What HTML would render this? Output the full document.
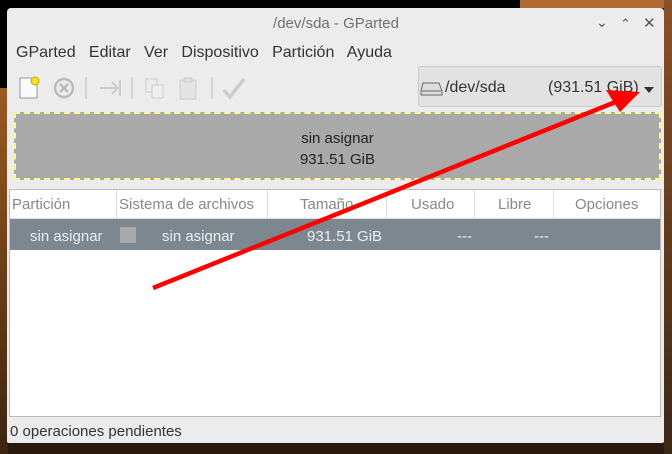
<!DOCTYPE html><html><head><style>
body{margin:0;width:672px;height:454px;overflow:hidden;background:#2a1a0e;font-family:"Liberation Sans",sans-serif;position:relative}
.t{position:absolute;white-space:nowrap}
</style></head><body>
<div style="position:absolute;left:0;top:0;width:672px;height:8px;background:#000"></div>
<div style="position:absolute;left:0;top:8px;width:22px;height:80px;background:#000"></div>
<div style="position:absolute;left:0;top:88px;width:8px;height:366px;background:linear-gradient(#9a5a20,#3a2510)"></div>
<div style="position:absolute;left:520px;top:0;width:152px;height:8px;background:#b06a30"></div>
<div style="position:absolute;left:664px;top:0;width:8px;height:454px;background:linear-gradient(#8a5028,#3a2818)"></div>
<div style="position:absolute;left:7px;top:8px;width:657px;height:435px;background:#ececec;border-radius:4px 4px 2px 2px"></div>
<div class="t" style="left:0;width:672px;top:15px;text-align:center;font-size:15px;color:#707070">/dev/sda - GParted</div>
<div class="t" style="left:596px;top:14px;font-size:14px;color:#555">&#8964;</div>
<div class="t" style="left:620px;top:16px;font-size:13px;color:#555">&#8963;</div>
<div class="t" style="left:643px;top:14px;font-size:15px;color:#555">✕</div>
<div class="t" style="left:16px;top:44px;font-size:16px;color:#333">GParted&nbsp;&nbsp; Editar&nbsp;&nbsp; Ver&nbsp;&nbsp; Dispositivo&nbsp;&nbsp; Partición&nbsp;&nbsp; Ayuda</div>
<svg style="position:absolute;left:18px;top:74px" width="240" height="28">
<rect x="2" y="4" width="17" height="20" fill="#fafafa" stroke="#999"/><circle cx="17" cy="7" r="4" fill="#f5e030" stroke="#c8a800"/>
<circle cx="46" cy="14" r="9" fill="none" stroke="#bbb" stroke-width="2.5"/><path d="M42 10l8 8M50 10l-8 8" stroke="#bbb" stroke-width="2.5"/>
<line x1="68" y1="3" x2="68" y2="25" stroke="#bbb"/>
<path d="M82 14h18M94 8l6 6-6 6M102 6v16" stroke="#ccc" stroke-width="2" fill="none"/>
<line x1="114" y1="3" x2="114" y2="25" stroke="#bbb"/>
<rect x="128" y="5" width="11" height="13" fill="#eee" stroke="#ccc"/><rect x="134" y="11" width="11" height="13" fill="#eee" stroke="#ccc"/>
<rect x="162" y="6" width="16" height="19" fill="#e4e4e4" stroke="#ccc"/><rect x="166" y="4" width="8" height="4" fill="#ddd" stroke="#ccc"/>
<line x1="194" y1="3" x2="194" y2="25" stroke="#bbb"/>
<path d="M206 16l6 7 14-18" stroke="#ccc" stroke-width="3.5" fill="none"/>
</svg>
<div style="position:absolute;left:418px;top:66px;width:244px;height:41px;background:#e2e2e2;border:1px solid #ccc;border-radius:3px;box-sizing:border-box"></div>
<svg style="position:absolute;left:420px;top:79px" width="24" height="18"><path d="M3 4h16l3 8v4H1v-4z" fill="#ddd" stroke="#666"/><path d="M2 12h19" stroke="#666"/></svg>
<div class="t" style="left:445px;top:79px;font-size:16px;color:#333">/dev/sda</div>
<div class="t" style="left:548px;top:79px;font-size:16px;color:#333">(931.51 GiB)</div>
<div style="position:absolute;left:644px;top:87px;border:5px solid transparent;border-top:6px solid #333"></div>
<div style="position:absolute;left:14px;top:112px;width:647px;height:68px;background:#a9a9a9;border:2px dashed #fafa90;box-sizing:border-box"></div>
<div class="t" style="left:14px;width:647px;top:128px;text-align:center;font-size:15px;color:#222;line-height:21px">sin asignar<br>931.51 GiB</div>
<div style="position:absolute;left:9px;top:189px;width:652px;height:228px;background:#fff;border:1px solid #bbb;box-sizing:border-box"></div>
<div style="position:absolute;left:10px;top:219px;width:650px;height:31px;background:#7d8790"></div>
<div style="position:absolute;left:10px;top:218px;width:650px;height:1px;background:#ddd"></div>
<div style="position:absolute;left:116px;top:190px;width:1px;height:28px;background:#ddd"></div>
<div style="position:absolute;left:267px;top:190px;width:1px;height:28px;background:#ddd"></div>
<div style="position:absolute;left:386px;top:190px;width:1px;height:28px;background:#ddd"></div>
<div style="position:absolute;left:474px;top:190px;width:1px;height:28px;background:#ddd"></div>
<div style="position:absolute;left:553px;top:190px;width:1px;height:28px;background:#ddd"></div>
<div class="t" style="left:12px;top:196px;font-size:15px;color:#888">Partición</div>
<div class="t" style="left:119px;top:196px;font-size:15px;color:#888">Sistema de archivos</div>
<div class="t" style="left:300px;top:196px;font-size:15px;color:#888">Tamaño</div>
<div class="t" style="left:411px;top:196px;font-size:15px;color:#888">Usado</div>
<div class="t" style="left:498px;top:196px;font-size:15px;color:#888">Libre</div>
<div class="t" style="left:575px;top:196px;font-size:15px;color:#888">Opciones</div>
<div class="t" style="left:30px;top:228px;font-size:15px;color:#eee">sin asignar</div>
<div style="position:absolute;left:120px;top:227px;width:16px;height:16px;background:#a9a9a9"></div>
<div class="t" style="left:162px;top:228px;font-size:15px;color:#eee">sin asignar</div>
<div class="t" style="left:307px;top:228px;font-size:15px;color:#eee">931.51 GiB</div>
<div class="t" style="left:457px;top:228px;font-size:15px;color:#eee">---</div>
<div class="t" style="left:534px;top:228px;font-size:15px;color:#eee">---</div>
<div class="t" style="left:10px;top:423px;font-size:15px;color:#333">0 operaciones pendientes</div>
<svg style="position:absolute;left:0;top:0" width="672" height="454"><line x1="153" y1="288" x2="618" y2="101" stroke="#f00" stroke-width="4.5"/><polygon points="640,92 606,90 620,112" fill="#f00"/></svg>
</body></html>
